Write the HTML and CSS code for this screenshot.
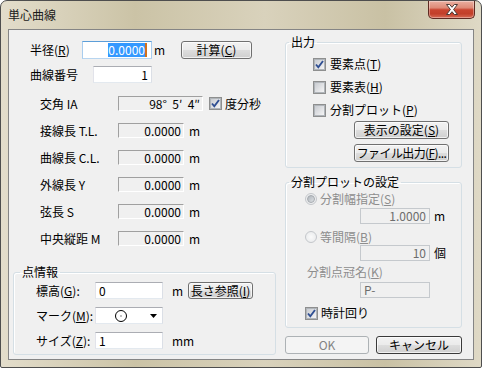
FILE: index.html
```html
<!DOCTYPE html>
<html lang="ja">
<head>
    <meta charset="UTF-8">
    <title>単心曲線</title>
    <link rel="stylesheet" href="styles.css">
</head>
<body>

<div class="window">
    <div class="titlebar">
        <span class="title">単心曲線</span>
        <span class="close">
            <svg width="14" height="11" viewBox="0 0 14 11"><path d="M1.5 0.5h3.2l2.3 2.8 2.3-2.8h3.2l-3.9 5 3.9 5h-3.2l-2.3-2.8-2.3 2.8h-3.2l3.9-5z" fill="#fff" stroke="#4b3b36"/></svg>
        </span>
    </div>

    <div class="client">
        <!-- left side -->
        <div class="left">
            <div class="row row-radius">
                <span class="lbl">半径(<u>R</u>)</span>
                <span class="edit focus"><span class="sel">0.0000</span><span class="caret"></span></span>
                <span class="unit u-radius">m</span>
                <span class="btn btn-calc">計算(<u>C</u>)</span>
            </div>
            <div class="row row-no">
                <span class="lbl">曲線番号</span>
                <span class="edit e-no">1</span>
            </div>

            <div class="readouts">
                <div class="row ro-row">
                    <span class="lbl">交角 IA</span>
                    <span class="ro wide">98°  5′  4″</span>
                    <span class="cb-wrap">
                        <span class="cb on"><svg width="9" height="9" viewBox="0 0 9 9"><path d="M1 4.5l2.3 2.8 4.7-6.3" fill="none" stroke="#2f4f93" stroke-width="1.9"/></svg></span>
                        <span>度分秒</span>
                    </span>
                </div>
                <div class="row ro-row"><span class="lbl">接線長 T.L.</span><span class="ro">0.0000</span><span class="unit u-ro">m</span></div>
                <div class="row ro-row"><span class="lbl">曲線長 C.L.</span><span class="ro">0.0000</span><span class="unit u-ro">m</span></div>
                <div class="row ro-row"><span class="lbl">外線長 Y</span><span class="ro">0.0000</span><span class="unit u-ro">m</span></div>
                <div class="row ro-row"><span class="lbl">弦長 S</span><span class="ro">0.0000</span><span class="unit u-ro">m</span></div>
                <div class="row ro-row"><span class="lbl">中央縦距 M</span><span class="ro">0.0000</span><span class="unit u-ro">m</span></div>
            </div>

            <fieldset class="group g-point">
                <legend>点情報</legend>
                <div class="pt-rows">
                    <div class="row pt-row">
                        <span class="lbl">標高(<u>G</u>):</span>
                        <span class="edit e-pt left-text">0</span>
                        <span class="unit u-pt">m</span>
                        <span class="btn btn-len">長さ参照(<u>I</u>)</span>
                    </div>
                    <div class="row pt-row">
                        <span class="lbl">マーク(<u>M</u>):</span>
                        <span class="combo">
                            <svg width="14" height="14" viewBox="0 0 14 14"><circle cx="7" cy="7" r="5.5" fill="none" stroke="#000"/><rect x="6.5" y="6.5" width="1" height="1" fill="#000"/></svg>
                            <svg width="8" height="4" viewBox="0 0 8 4"><path d="M0 0h7l-3.5 4z" fill="#000"/></svg>
                        </span>
                    </div>
                    <div class="row pt-row">
                        <span class="lbl">サイズ(<u>Z</u>):</span>
                        <span class="edit e-pt left-text">1</span>
                        <span class="unit u-pt">mm</span>
                    </div>
                </div>
            </fieldset>
        </div>

        <!-- right side -->
        <div class="right">
            <fieldset class="group g-out">
                <legend>出力</legend>
                <div class="checks">
                    <span class="cb-wrap">
                        <span class="cb on"><svg width="9" height="9" viewBox="0 0 9 9"><path d="M1 4.5l2.3 2.8 4.7-6.3" fill="none" stroke="#2f4f93" stroke-width="1.9"/></svg></span>
                        <span>要素点(<u>T</u>)</span>
                    </span>
                    <span class="cb-wrap"><span class="cb"></span><span>要素表(<u>H</u>)</span></span>
                    <span class="cb-wrap"><span class="cb"></span><span>分割プロット(<u>P</u>)</span></span>
                </div>
                <div class="out-btns">
                    <span class="btn btn-out">表示の設定(<u>S</u>)</span>
                    <span class="btn btn-out tight">ファイル出力(<u>F</u>)...</span>
                </div>
            </fieldset>

            <fieldset class="group g-div">
                <legend>分割プロットの設定</legend>
                <div class="row rb-row r1"><span class="rb on"></span><span>分割幅指定(<u>S</u>)</span></div>
                <div class="row box-row b1"><span class="dis-box">1.0000</span><span class="unit">m</span></div>
                <div class="row rb-row r2"><span class="rb"></span><span>等間隔(<u>B</u>)</span></div>
                <div class="row box-row b2"><span class="dis-box">10</span><span class="unit">個</span></div>
                <div class="row pre-lbl"><span>分割点冠名(<u>K</u>)</span></div>
                <div class="row box-row b3"><span class="dis-box left-text">P-</span></div>
                <div class="row cw-row">
                    <span class="cb-wrap">
                        <span class="cb on"><svg width="9" height="9" viewBox="0 0 9 9"><path d="M1 4.5l2.3 2.8 4.7-6.3" fill="none" stroke="#2f4f93" stroke-width="1.9"/></svg></span>
                        <span>時計回り</span>
                    </span>
                </div>
            </fieldset>

            <div class="row dlg-btns">
                <span class="btn btn-ok">OK</span>
                <span class="btn btn-cancel">キャンセル</span>
            </div>
        </div>
    </div>
</div>

</body>
</html>
```

FILE: styles.css
```css
* {
    box-sizing: border-box;
}
body {
    margin: 0;
    font-family: "Noto Sans CJK JP", "Liberation Sans", sans-serif;
    font-size: 12px;
    line-height: 14px;
    color: #000;
    background: #fff;
}
u {
    text-decoration: underline;
    text-underline-offset: 1px;
}
.window {
    width: 482px;
    height: 368px;
    border: 1px solid #4e4e4e;
    border-radius: 7px 7px 2px 2px;
    background: linear-gradient(90deg, #e3ddcb 0%, #cbc3a6 28%, #d9d2bc 55%, #c9c1a4 80%, #dfd9c6 100%);
    display: flex;
    flex-direction: column;
}
.titlebar {
    height: 28px;
    display: flex;
    justify-content: space-between;
    align-items: flex-start;
}
.title {
    margin: 7px 0 0 7px;
    color: #1a1a1a;
}
.close {
    width: 47px;
    height: 18px;
    margin-right: 6px;
    border: 1px solid #5e2a22;
    border-top: none;
    border-radius: 0 0 5px 5px;
    background: linear-gradient(#eab0a1 0%, #de8a77 40%, #c9442f 52%, #c23f2a 75%, #d76a54 100%);
    box-shadow: inset 0 0 0 1px rgba(255,255,255,0.35);
    display: flex;
    align-items: center;
    justify-content: center;
}
.client {
    width: 466px;
    height: 331px;
    margin-left: 7px;
    border: 1px solid #858585;
    background: #f0f0f0;
    display: flex;
}
.row {
    display: flex;
    align-items: center;
}
.left {
    width: 263px;
    margin-left: 4px;
    display: flex;
    flex-direction: column;
}
.right {
    width: 177px;
    margin-left: 9px;
    display: flex;
    flex-direction: column;
}

/* edits */
.edit {
    height: 17px;
    border: 1px solid;
    border-color: #abadb3 #dbdfe6 #e3e9ef #e2e3ea;
    background: #fff;
    display: flex;
    align-items: center;
    justify-content: flex-end;
    padding: 0 3px;
}
.edit.focus {
    width: 70px;
    height: 18px;
    border-color: #5c9ed8 #a9cdee #b7d5f0 #a9cdee;
    padding-right: 4px;
}
.left-text {
    justify-content: flex-start;
}
.sel {
    background: #3399ff;
    color: #fff;
}
.caret {
    width: 2px;
    height: 14px;
    background: #d0701c;
}
.unit {
    padding-left: 2px;
}

/* buttons */
.btn {
    height: 18px;
    border: 1px solid #707070;
    border-radius: 3px;
    background: linear-gradient(#f2f2f2 0%, #ebebeb 48%, #dddddd 52%, #cfcfcf 100%);
    box-shadow: inset 0 0 0 1px rgba(255,255,255,0.7);
    text-align: center;
    line-height: 16px;
    white-space: nowrap;
}
.btn.tight {
    letter-spacing: -0.6px;
}

.row-radius {
    margin-top: 11px;
    height: 18px;
    padding-left: 17px;
}
.row-radius .lbl {
    width: 52px;
}
.u-radius {
    width: 29px;
}
.btn-calc {
    width: 71px;
}
.row-no {
    margin-top: 7px;
    height: 17px;
    padding-left: 17px;
}
.row-no .lbl {
    width: 63px;
}
.e-no {
    width: 59px;
}

/* read only values */
.readouts {
    margin-top: 13px;
    padding-left: 27px;
    display: flex;
    flex-direction: column;
    gap: 12px;
}
.ro-row {
    height: 15px;
}
.ro-row .lbl {
    width: 78px;
}
.ro {
    width: 66px;
    height: 15px;
    border-top: 1px solid #a0a0a0;
    border-left: 1px solid #a0a0a0;
    border-right: 1px solid #fff;
    border-bottom: 1px solid #fff;
    padding-right: 2px;
    text-align: right;
    white-space: pre;
    line-height: 13px;
}
.ro.wide {
    width: 85px;
}
.u-ro {
    padding-left: 5px;
}

/* checkbox */
.cb-wrap {
    display: flex;
    align-items: center;
    gap: 3px;
}
.ro-row .cb-wrap {
    margin-left: 6px;
}
.cb {
    width: 13px;
    height: 13px;
    border: 1px solid #8e8f8f;
    background: #f4f4f4;
    display: grid;
    place-items: center;
}
.cb::before {
    content: "";
    grid-area: 1 / 1;
    width: 9px;
    height: 9px;
    border: 1px solid #b0b5ba;
    background: linear-gradient(135deg, #c9ccd1, #f4f4f5);
}
.cb svg {
    grid-area: 1 / 1;
}

/* group boxes */
.group {
    margin: 0;
    padding: 0;
    min-width: 0;
    border: 1px solid #d5dfe5;
    border-radius: 3px;
    box-shadow: inset 1px 1px #fff;
}
.group legend {
    padding: 0 2px;
    line-height: 14px;
}
.g-point {
    margin-top: 19px;
    padding-bottom: 5px;
}
.g-point legend {
    margin-left: 6px;
}
.pt-rows {
    margin-top: 3px;
    padding-left: 22px;
    display: flex;
    flex-direction: column;
    gap: 8px;
}
.pt-row {
    height: 17px;
}
.pt-row .lbl {
    width: 59px;
}
.e-pt {
    width: 68px;
}
.u-pt {
    width: 25px;
    padding-left: 9px;
}
.btn-len {
    width: 65px;
    height: 17px;
    line-height: 15px;
}
.combo {
    width: 68px;
    height: 17px;
    border: 1px solid;
    border-color: #abadb3 #dbdfe6 #e3e9ef #e2e3ea;
    background: #fff;
    display: flex;
    align-items: center;
    justify-content: space-between;
    padding: 0 4px 0 18px;
}

/* output */
.g-out {
    margin-top: 5px;
    padding-bottom: 5px;
}
.g-out legend,
.g-div legend {
    margin-left: 3px;
}
.checks {
    margin-top: 8px;
    padding-left: 27px;
    display: flex;
    flex-direction: column;
    gap: 9px;
}
.checks .cb-wrap {
    height: 14px;
    gap: 4px;
}
.out-btns {
    margin-top: 4px;
    padding-left: 68px;
    display: flex;
    flex-direction: column;
    gap: 5px;
}
.btn-out {
    width: 95px;
}

/* division plot */
.g-div {
    margin-top: 7px;
    padding-bottom: 7px;
    color: #6d6d6d;
}
.g-div legend {
    color: #000;
}
.rb-row {
    height: 12px;
    padding-left: 19px;
    gap: 3px;
}
.r1 {
    margin-top: 4px;
}
.r2 {
    margin-top: 7px;
}
.rb {
    width: 12px;
    height: 12px;
    border: 1px solid #c4c7cb;
    border-radius: 50%;
    background: radial-gradient(#fafafa, #e6e8ea);
    display: grid;
    place-items: center;
}
.rb.on::before {
    content: "";
    width: 6px;
    height: 6px;
    border-radius: 50%;
    border: 1px solid #a4a9ae;
    background: linear-gradient(135deg, #aeb4ba, #dfe2e5);
}
.box-row {
    height: 16px;
    padding-left: 74px;
    color: #000;
}
.box-row .unit {
    padding-left: 4px;
}
.b1 {
    margin-top: 3px;
}
.b2 {
    margin-top: 2px;
}
.b3 {
    margin-top: 3px;
}
.dis-box {
    width: 70px;
    height: 16px;
    border: 1px solid #c5c9cd;
    background: #f0f0f0;
    color: #6d6d6d;
    display: flex;
    align-items: center;
    justify-content: flex-end;
    padding: 0 3px;
}
.dis-box.left-text {
    justify-content: flex-start;
    padding-left: 3px;
}
.pre-lbl {
    height: 14px;
    margin-top: 4px;
    padding-left: 21px;
    color: #8d8d8d;
}
.g-div .rb-row {
    color: #8d8d8d;
}
.cw-row {
    margin-top: 8px;
    padding-left: 19px;
    color: #000;
}

.dlg-btns {
    margin-top: 8px;
    gap: 7px;
}
.btn-ok {
    width: 84px;
    border-color: #adb2b5;
    background: #f4f4f4;
    box-shadow: none;
    color: #838383;
}
.btn-cancel {
    width: 86px;
    border-color: #3a3a3a;
}
```
